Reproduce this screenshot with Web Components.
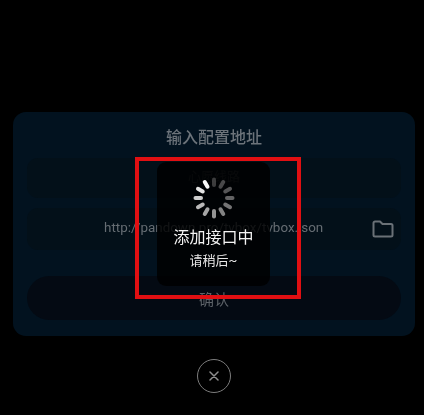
<!DOCTYPE html>
<html>
<head>
<meta charset="utf-8">
<style>
  html, body { margin: 0; height: 100%; background: #000; overflow: hidden; }
  body { font-family: Roboto, "Noto Sans CJK SC", sans-serif; }
</style>
</head>
<body>
<config-screen>
  <config-dialog title-text="输入配置地址">
    <config-row>心愿线路</config-row>
    <config-row url>http://pandown.pro/tvbox/tvbox.json</config-row>
    <config-button>确认</config-button>
  </config-dialog>
  <close-button></close-button>
  <loading-toast slot="over" title-text="添加接口中" sub-text="请稍后~"></loading-toast>
  <red-mark slot="over"></red-mark>
</config-screen>
<script>
class ConfigScreen extends HTMLElement {
  connectedCallback() {
    this.attachShadow({ mode: "open" }).innerHTML = `
    <style>
      :host {
        display: flex;
        flex-direction: column;
        align-items: center;
        position: relative;
        box-sizing: border-box;
        width: 424px;
        height: 415px;
        padding: 112px 9px 0 13px;
        filter: blur(0.35px);
      }
    </style>
    <slot></slot>
    <slot name="over"></slot>`;
  }
}

class ConfigDialog extends HTMLElement {
  connectedCallback() {
    this.attachShadow({ mode: "open" }).innerHTML = `
    <style>
      :host {
        display: flex;
        flex-direction: column;
        box-sizing: border-box;
        width: 402px;
        height: 224px;
        padding: 0 14px;
        border-radius: 13px;
        background: #02121f;
      }
      .title {
        height: 46px;
        line-height: 51px;
        text-align: center;
        font-size: 16px;
        font-weight: 500;
        color: #6c737a;
      }
      .rows { display: flex; flex-direction: column; gap: 10px; }
    </style>
    <div class="title">${this.getAttribute("title-text")}</div>
    <div class="rows"><slot></slot></div>`;
  }
}

class ConfigRow extends HTMLElement {
  connectedCallback() {
    const folder = this.hasAttribute("url") ? `
      <svg width="22" height="18" viewBox="0 0 22 18" fill="none" stroke="#6a7177" stroke-width="2" stroke-linejoin="round">
        <path d="M1.5 15V3a1.5 1.5 0 0 1 1.5-1.5h5l2.5 2.5H19a1.5 1.5 0 0 1 1.5 1.5V15a1.5 1.5 0 0 1-1.5 1.5H3A1.5 1.5 0 0 1 1.5 15z"/>
      </svg>` : "";
    this.attachShadow({ mode: "open" }).innerHTML = `
    <style>
      :host {
        display: flex;
        align-items: center;
        justify-content: center;
        position: relative;
        box-sizing: border-box;
        height: 40px;
        padding-bottom: 6px;
        border-radius: 11px;
        background: #031019;
        font-size: 13px;
        color: #2c3238;
      }
      :host([url]) {
        height: 42px;
        padding: 0 0 4px 77px;
        font-size: 13.4px;
        color: #666d73;
        justify-content: flex-start;
      }
      svg { position: absolute; right: 7px; top: 12px; }
    </style>
    <slot></slot>${folder}`;
  }
}

class ConfigButton extends HTMLElement {
  connectedCallback() {
    this.attachShadow({ mode: "open" }).innerHTML = `
    <style>
      :host {
        display: flex;
        align-items: center;
        justify-content: center;
        height: 44px;
        margin-top: 16px;
        border-radius: 22px;
        background: #040a13;
        font-size: 15px;
        color: #5d6268;
      }
    </style>
    <slot></slot>`;
  }
}

class CloseButton extends HTMLElement {
  connectedCallback() {
    this.attachShadow({ mode: "open" }).innerHTML = `
    <style>
      :host {
        display: flex;
        align-items: center;
        justify-content: center;
        box-sizing: border-box;
        width: 34px;
        height: 34px;
        margin-top: 23px;
        border: 1.3px solid #7c7c7c;
        border-radius: 50%;
      }
    </style>
    <svg width="10" height="10" viewBox="0 0 10 10" stroke="#8e8e8e" stroke-width="1.5" stroke-linecap="round">
      <path d="M1 1l8 8M9 1l-8 8"/>
    </svg>`;
  }
}

class LoadingToast extends HTMLElement {
  connectedCallback() {
    let spokes = "";
    // 12 spokes, brightest at 11 o'clock, fading counter-clockwise
    for (let i = 0; i < 12; ++i) {
      const step = 11 - i;
      const shade = Math.round(250 - step * 13);
      spokes += `<rect x="-2" y="-20.5" width="4" height="9.5" rx="2" fill="rgb(${shade},${shade},${shade})" opacity="${1 - step * 0.04}" transform="rotate(${i * 30})"/>`;
    }
    this.attachShadow({ mode: "open" }).innerHTML = `
    <style>
      :host {
        position: absolute;
        left: 157px;
        top: 162px;
        width: 113px;
        height: 124px;
        display: flex;
        flex-direction: column;
        align-items: center;
        box-sizing: border-box;
        padding-top: 15px;
        border-radius: 9px;
        background: rgba(0, 0, 0, 0.82);
        color: #f4f4f4;
      }
      svg { display: block; }
      .title { margin-top: 8px; font-size: 16px; line-height: 22px; }
      .sub { margin-top: 4px; font-size: 13px; line-height: 16px; color: #e6e6e6; }
    </style>
    <svg width="42" height="42" viewBox="-21 -21 42 42">${spokes}</svg>
    <div class="title">${this.getAttribute("title-text")}</div>
    <div class="sub">${this.getAttribute("sub-text")}</div>`;
  }
}

class RedMark extends HTMLElement {
  connectedCallback() {
    this.attachShadow({ mode: "open" }).innerHTML = `
    <style>
      :host {
        position: absolute;
        left: 135px;
        top: 157px;
        width: 166px;
        height: 142px;
        box-sizing: border-box;
        border: 4.5px solid #e10f12;
      }
    </style>`;
  }
}

customElements.define("config-screen", ConfigScreen);
customElements.define("config-dialog", ConfigDialog);
customElements.define("config-row", ConfigRow);
customElements.define("config-button", ConfigButton);
customElements.define("close-button", CloseButton);
customElements.define("loading-toast", LoadingToast);
customElements.define("red-mark", RedMark);
</script>
</body>
</html>
